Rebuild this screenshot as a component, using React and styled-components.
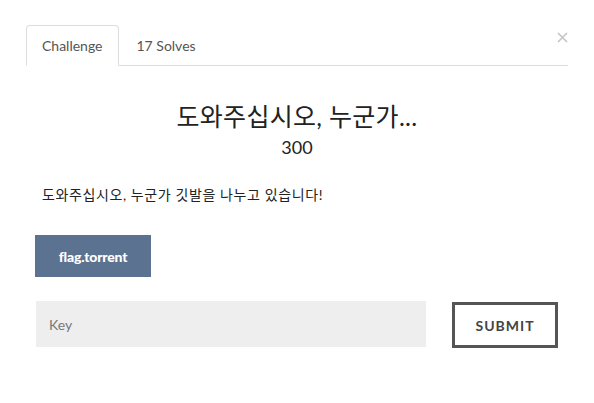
import React from "react";
import styled, { createGlobalStyle } from "styled-components";

const GlobalStyle = createGlobalStyle`
    body {
        margin: 0;
        background: #fff;
        font-family: Lato, "Noto Sans CJK KR", sans-serif;
    }
`;

const Modal = styled.div`
    width: 594px;
    height: 403px;
    box-sizing: border-box;
    padding: 25px 26px 0 26px;
`;

const TabBar = styled.ul`
    display: flex;
    align-items: flex-start;
    margin: 0;
    padding: 0;
    list-style: none;
    border-bottom: 1px solid #ddd;
`;

const Tab = styled.li`
    box-sizing: border-box;
    padding: 0 15px;
    margin-bottom: -1px;
    margin-right: 2px;
    display: flex;
    align-items: center;
    font-size: 14px;
    color: #555;
    border: 1px solid ${p => (p.active ? "#ddd" : "transparent")};
    border-bottom-color: transparent;
    border-radius: 4px 4px 0 0;
    background: #fff;
    height: ${p => (p.active ? "41px" : "40px")};
`;

const Close = styled.button`
    margin-left: auto;
    margin-top: 5px;
    padding: 0;
    border: 0;
    background: none;
    width: 12px;
    height: 14px;
    display: flex;
    align-items: center;
    justify-content: center;
`;

const Body = styled.div`
    padding: 0 10px;
`;

const Title = styled.h3`
    margin: 34px 0 0;
    text-align: center;
    font-size: 25px;
    font-weight: 400;
    line-height: 32px;
    letter-spacing: 0.3px;
    color: #222;
`;

const Points = styled.h4`
    margin: 3px 0 0;
    text-align: center;
    font-size: 18px;
    font-weight: 400;
    line-height: 24px;
    color: #222;
`;

const Description = styled.p`
    margin: 26px 0 0 6px;
    font-size: 14px;
    line-height: 20px;
    letter-spacing: 0.6px;
    color: #222;
`;

const FileButton = styled.a`
    display: inline-flex;
    align-items: center;
    justify-content: center;
    width: 116px;
    height: 42px;
    margin-top: 30px;
    margin-left: -1px;
    background: #5b7290;
    color: #fff;
    font-weight: 900;
    font-size: 14px;
    letter-spacing: -0.2px;
    text-decoration: none;
`;

const SubmitRow = styled.form`
    display: flex;
    gap: 26px;
    margin-top: 24px;
`;

const KeyInput = styled.input`
    width: 391px;
    height: 46px;
    box-sizing: border-box;
    border: 0;
    background: #eee;
    padding: 0 13px;
    font-family: Lato, sans-serif;
    font-size: 14px;
    color: #333;
    outline: none;

    &::placeholder {
        color: #777;
    }
`;

const SubmitButton = styled.button`
    width: 106px;
    height: 46px;
    margin-top: 1px;
    box-sizing: border-box;
    border: 3px solid #555;
    background: #fff;
    font-family: Lato, sans-serif;
    font-weight: 700;
    font-size: 14px;
    letter-spacing: 1px;
    color: #444;
`;

const CloseIcon = () => (
    <svg width="11" height="11" viewBox="0 0 11 11">
        <path d="M1 1 L10 10 M10 1 L1 10" stroke="#c4c4c4" strokeWidth="1.6" />
    </svg>
);

export default function App() {
    return (
        <Modal>
            <GlobalStyle />
            <TabBar>
                <Tab active>Challenge</Tab>
                <Tab>17 Solves</Tab>
                <Close aria-label="Close"><CloseIcon /></Close>
            </TabBar>
            <Body>
                <Title>도와주십시오, 누군가...</Title>
                <Points>300</Points>
                <Description>도와주십시오, 누군가 깃발을 나누고 있습니다!</Description>
                <FileButton href="#">flag.torrent</FileButton>
                <SubmitRow onSubmit={e => e.preventDefault()}>
                    <KeyInput placeholder="Key" />
                    <SubmitButton type="submit">SUBMIT</SubmitButton>
                </SubmitRow>
            </Body>
        </Modal>
    );
}
